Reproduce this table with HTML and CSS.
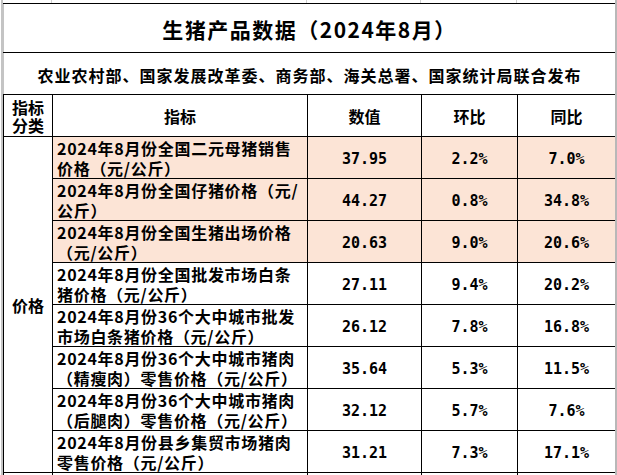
FILE: index.html
```html
<!DOCTYPE html>
<html lang="zh-CN">
<head>
<meta charset="utf-8">
<title>生猪产品数据（2024年8月）</title>
<link rel="stylesheet" href="styles.css">
</head>
<body>
<div class="sheet">
  <div class="stub">
    <span class="s1"></span><span class="s2"></span><span class="s3"></span><span class="s4"></span>
  </div>
  <table class="grid">
    <colgroup>
      <col class="c1"><col class="c2"><col class="c3"><col class="c4"><col class="c5">
    </colgroup>
    <tr class="r-title"><td colspan="5" class="title">生猪产品数据（2024年8月）</td></tr>
    <tr class="r-sub"><td colspan="5" class="sub">农业农村部、国家发展改革委、商务部、海关总署、国家统计局联合发布</td></tr>
    <tr class="r-row"><th class="cat">指标<br>分类</th><th>指标</th><th>数值</th><th>环比</th><th>同比</th></tr>
    <tr class="r-row hl"><td class="cat" rowspan="8">价格</td><td class="name">2024年8月份全国二元母猪销售<br>价格（元/公斤）</td><td class="num">37.95</td><td class="num">2.2%</td><td class="num">7.0%</td></tr>
    <tr class="r-row hl"><td class="name">2024年8月份全国仔猪价格（元/<br>公斤）</td><td class="num">44.27</td><td class="num">0.8%</td><td class="num">34.8%</td></tr>
    <tr class="r-row hl"><td class="name">2024年8月份全国生猪出场价格<br>（元/公斤）</td><td class="num">20.63</td><td class="num">9.0%</td><td class="num">20.6%</td></tr>
    <tr class="r-row"><td class="name">2024年8月份全国批发市场白条<br>猪价格（元/公斤）</td><td class="num">27.11</td><td class="num">9.4%</td><td class="num">20.2%</td></tr>
    <tr class="r-row"><td class="name">2024年8月份36个大中城市批发<br>市场白条猪价格（元/公斤）</td><td class="num">26.12</td><td class="num">7.8%</td><td class="num">16.8%</td></tr>
    <tr class="r-row"><td class="name">2024年8月份36个大中城市猪肉<br>（精瘦肉）零售价格（元/公斤）</td><td class="num">35.64</td><td class="num">5.3%</td><td class="num">11.5%</td></tr>
    <tr class="r-row"><td class="name">2024年8月份36个大中城市猪肉<br>（后腿肉）零售价格（元/公斤）</td><td class="num">32.12</td><td class="num">5.7%</td><td class="num">7.6%</td></tr>
    <tr class="r-row"><td class="name">2024年8月份县乡集贸市场猪肉<br>零售价格（元/公斤）</td><td class="num">31.21</td><td class="num">7.3%</td><td class="num">17.1%</td></tr>
    <tr class="r-row"><td class="cat"></td><td></td><td></td><td></td><td></td></tr>
  </table>
</div>
</body>
</html>
```
FILE: styles.css
```css
html, body {
  margin: 0;
  padding: 0;
  overflow: hidden;
  background: #fff;
}
body {
  font-family: "Noto Sans CJK SC", sans-serif;
  font-weight: 700;
  color: #000;
  text-spacing-trim: space-all;
  font-kerning: none;
}
.sheet {
  margin-left: 1px;
  width: 612px;
  height: 475px;
  overflow: hidden;
  border-left: 2px solid #c4c4c4;
  border-right: 2px solid #b8b8b8;
}
.stub {
  display: flex;
  height: 3px;
}
.stub span {
  display: block;
  height: 3px;
  border-right: 1px solid #d0d0d0;
}
.stub .s1 { width: 48px; }
.stub .s2 { width: 254px; }
.stub .s3 { width: 113px; }
.stub .s4 { width: 95px; }
.grid {
  border-collapse: collapse;
  table-layout: fixed;
  width: 612px;
}
.c1 { width: 49px; }
.c2 { width: 255px; }
.c3 { width: 114px; }
.c4 { width: 96px; }
.c5 { width: 98px; }
.grid td, .grid th {
  border: 1px solid #000;
  padding: 0;
  font-weight: 700;
  font-size: 16px;
  line-height: 20px;
  text-align: center;
  vertical-align: middle;
}
.grid .title, .grid .sub {
  border-left-color: #c4c4c4;
}
.r-title { height: 49px; }
.r-sub, .r-row { height: 42px; }
.grid .title {
  font-size: 21px;
  letter-spacing: 1.5px;
  line-height: 28px;
  padding-top: 2px;
}
.grid .sub {
  font-size: 16px;
  letter-spacing: 1px;
  line-height: 22px;
  padding-top: 3px;
}
.grid .cat {
  line-height: 18px;
  background: #fff;
}
.grid .name {
  text-align: left;
  padding: 1px 0 0 4px;
  letter-spacing: 0.7px;
  white-space: nowrap;
}
.grid .num {
  font-family: "DejaVu Sans Mono", monospace;
  font-size: 15px;
  padding-top: 2px;
}
.hl td.name, .hl td.num {
  background: #fce4d6;
}
```
